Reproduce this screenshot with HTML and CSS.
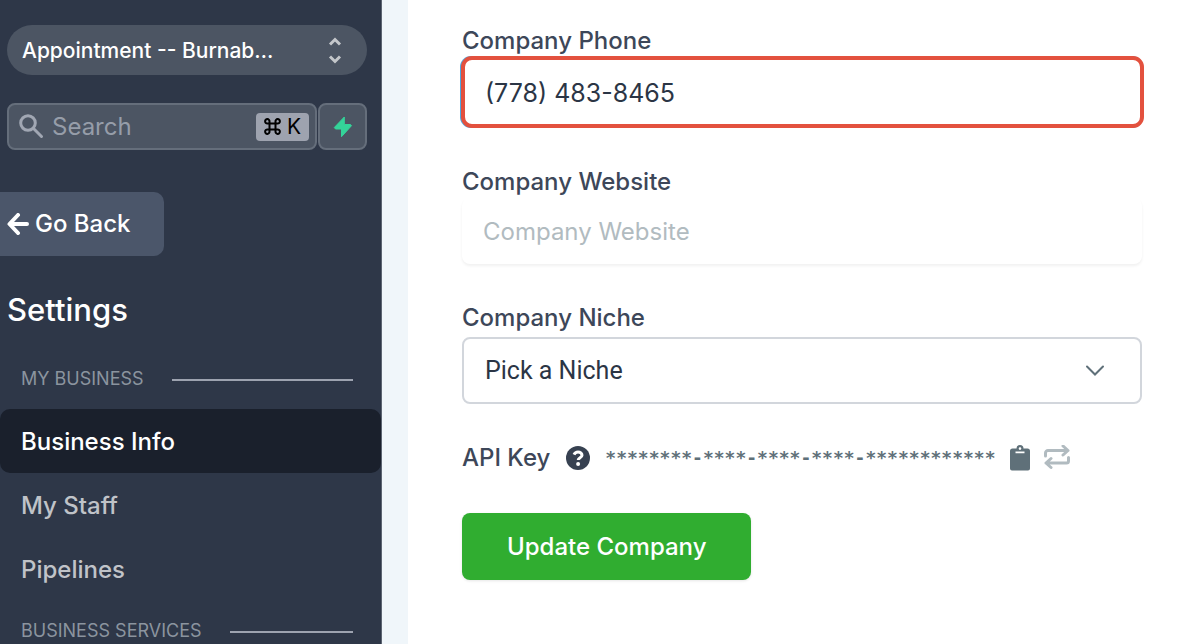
FILE: index.html
```html
<!DOCTYPE html>
<html lang="en">
<head>
<meta charset="utf-8">
<title>Business Info</title>
<meta name="viewport" content="width=device-width, initial-scale=1">
<link rel="stylesheet" href="styles.css">
</head>
<body>
<div class="app">
  <aside class="sidebar">
    <button type="button" class="switcher">
      <span class="switcher-name">Appointment -- Burnab…</span>
      <svg class="switcher-icon" width="14" height="28" viewBox="0 0 14 28" aria-hidden="true"><path d="M2 7.500l5-5 5 5M2 19.500l5 5 5-5"/></svg>
    </button>
    <div class="search-row">
      <label class="search">
        <svg width="25" height="25" viewBox="0 0 25 25" aria-hidden="true"><circle cx="9" cy="9" r="7.300"/><path d="M14.500 14.500l8 8"/></svg>
        <input class="search-input" type="text" placeholder="Search" aria-label="Search">
        <kbd class="shortcut"><svg width="17" height="17" viewBox="0 0 17 17" aria-hidden="true"><path d="M5.500 5.500h6v6h-6zM5.500 5.500H3.500a2.200 2.200 0 1 1 2-2zM11.500 5.500v-2a2.200 2.200 0 1 1 2 2zM11.500 11.500h2a2.200 2.200 0 1 1-2 2zM5.500 11.500v2a2.200 2.200 0 1 1-2-2z"/></svg>K</kbd>
      </label>
      <button type="button" class="bolt" aria-label="Quick actions">
        <svg width="20" height="22" viewBox="0 0 20 22" aria-hidden="true"><path d="M11.300 1 1.300 11.500 2.500 13h6v7.700L18.500 9.700 17.500 8.500h-6.200z"/></svg>
      </button>
    </div>
    <button type="button" class="back">
      <svg width="22" height="22" viewBox="0 0 22 22" aria-hidden="true"><path d="M11 2 2.500 11l8.500 9M3.500 11H20"/></svg>
      <span>Go Back</span>
    </button>
    <h1 class="title">Settings</h1>
    <nav class="nav">
      <h2 class="section">My Business</h2>
      <a class="item active" href="#info">Business Info</a>
      <a class="item" href="#staff">My Staff</a>
      <a class="item" href="#pipelines">Pipelines</a>
      <h2 class="section section-next">Business Services</h2>
    </nav>
  </aside>
  <main class="main">
    <form class="form">
      <div class="field">
        <label for="phone">Company Phone</label>
        <input id="phone" class="control phone" type="tel" value="(778) 483-8465">
      </div>
      <div class="field">
        <label for="website">Company Website</label>
        <input id="website" class="control website" type="text" placeholder="Company Website">
      </div>
      <div class="field">
        <label for="niche">Company Niche</label>
        <div class="select-wrap">
          <select id="niche" class="control niche"><option>Pick a Niche</option></select>
          <svg class="chevron" width="20" height="12" viewBox="0 0 20 12" aria-hidden="true"><path d="M2 1.500l8 8 8-8"/></svg>
        </div>
      </div>
      <div class="api">
        <span class="api-label">API Key</span>
        <svg class="help" width="24" height="24" viewBox="0 0 24 24" aria-hidden="true"><circle cx="12" cy="12" r="12"/><path d="M8 8.700C8.800 6.900 10 6 12 6c2.300 0 4 1.300 4 3.200 0 2.600-3.800 2.500-3.800 4.900"/><circle class="dot" cx="12.100" cy="18" r="2"/></svg>
        <code class="key">********-****-****-****-************</code>
        <button type="button" class="icon-button" aria-label="Copy API key">
          <svg width="20" height="26" viewBox="0 0 20 26" aria-hidden="true"><path fill="#5f7079" fill-rule="evenodd" d="M2.500 3.500h4a3.500 3.500 0 0 1 7 0h4A2.500 2.500 0 0 1 20 6v17.500a2 2 0 0 1-2 2H2a2 2 0 0 1-2-2V6a2.500 2.500 0 0 1 2.500-2.500zM10 2.300a1.300 1.300 0 1 0 0 2.600 1.300 1.300 0 0 0 0-2.600zM5.500 6.500v1.800h9V6.500z"/></svg>
        </button>
        <button type="button" class="icon-button" aria-label="Regenerate API key">
          <svg width="26" height="26" viewBox="0 0 26 26" aria-hidden="true"><path class="swap" d="M1.500 11V8a2.500 2.500 0 0 1 2.500-2.500h20M19 1l5 4.500-5 4.500M24.500 12.500V16a2 2 0 0 1-2 2H2M7 13.500 2 18l5 4.500"/></svg>
        </button>
      </div>
      <button type="submit" class="submit">Update Company</button>
    </form>
  </main>
</div>
</body>
</html>
```
FILE: styles.css
```css
*,
*::before,
*::after {
  box-sizing: border-box;
}

body {
  margin: 0;
  background: #f0f6fa;
  color: #3d4759;
  font-family: Inter, "Liberation Sans", sans-serif;
  font-size: 24px;
  line-height: 32px;
}

button,
input,
select {
  margin: 0;
  border: 0;
  font: inherit;
}

button {
  cursor: pointer;
}

svg {
  display: block;
  flex: none;
  fill: none;
}

.app {
  display: flex;
  gap: 26px;
  min-height: 100vh;
}

.sidebar {
  flex: none;
  width: 382px;
  height: 100vh;
  overflow: hidden;
  padding-top: 25px;
  border-right: 1px solid #5d6572;
  background: #2e3748;
}

.switcher {
  display: flex;
  align-items: center;
  justify-content: space-between;
  width: calc(100% - 21px);
  height: 50px;
  margin: 0 14px 28px 7px;
  padding: 1px 25px 0 15px;
  border-radius: 25px;
  background: #4c5563;
  color: #fff;
  font-size: 21px;
  font-weight: 500;
}

.switcher-icon {
  stroke: #c3c6ca;
  stroke-width: 3;
}

.search-row {
  display: flex;
  gap: 1px;
  margin: 0 14px 42px 7px;
}

.search {
  display: flex;
  flex: 1;
  align-items: center;
  gap: 8px;
  min-width: 0;
  height: 47px;
  padding: 0 6px 0 10px;
  border: 2px solid #656e7b;
  border-radius: 8px;
  background: #4c5563;
}

.search svg {
  stroke: #a1a7b3;
  stroke-width: 3;
  stroke-linecap: round;
}

.search-input {
  flex: 1;
  min-width: 0;
  padding: 0;
  outline: 0;
  background: transparent;
  color: #fff;
}

.search-input::placeholder {
  color: #969da9;
  opacity: 1;
}

.shortcut {
  display: flex;
  align-items: center;
  gap: 6px;
  height: 28px;
  padding: 0 8px;
  border-radius: 4px;
  background: #9ea3af;
  color: #000;
  font-family: inherit;
  font-size: 21px;
}

.search .shortcut svg {
  stroke: #000;
  stroke-width: 2;
}

.bolt {
  display: grid;
  place-items: center;
  width: 49px;
  padding: 0;
  border: 2px solid #656e7b;
  border-radius: 8px;
  background: #4c5563;
}

.bolt path {
  fill: #34d399;
  stroke: #34d399;
  stroke-width: 1;
  stroke-linejoin: round;
}

.back {
  display: flex;
  align-items: center;
  gap: 6px;
  height: 64px;
  padding: 0 33px 0 7px;
  border-radius: 0 10px 10px 0;
  background: #4b566a;
  color: #fff;
  font-weight: 500;
}

.back path {
  stroke: #fff;
  stroke-width: 4;
  stroke-linecap: round;
  stroke-linejoin: round;
}

.title {
  margin: 34px 0 33px 7px;
  color: #fff;
  font-size: 31px;
  font-weight: 500;
  line-height: 40px;
}

.section {
  display: flex;
  align-items: center;
  gap: 28px;
  margin: 0 28px 14px 21px;
  color: #8b949f;
  font-size: 18px;
  font-weight: 400;
  text-transform: uppercase;
}

.section::after {
  flex: 1;
  height: 2px;
  margin-top: 2px;
  background: #9da3b0;
  content: "";
}

.section-next {
  margin-top: 14px;
}

.item {
  display: block;
  padding: 17px 21px 15px;
  border-radius: 10px;
  color: #c0c3c8;
  font-weight: 500;
  text-decoration: none;
}

.item.active {
  background: #1a202c;
  color: #fff;
}

.main {
  flex: 1;
  min-width: 0;
  padding: 25px 45px 24px 54px;
  background: #fff;
}

.form {
  display: flex;
  flex-direction: column;
}

.field {
  display: flex;
  flex-direction: column;
  margin-bottom: 38px;
  font-weight: 500;
}

.control {
  width: 100%;
  height: 67px;
  padding: 0 21px;
  border-radius: 8px;
  background: #fff;
  color: #2b3545;
  font-size: 25px;
  font-weight: 400;
}

.phone {
  width: auto;
  height: 72px;
  margin: -1px -2px 0 -1px;
  padding: 1px 20px 0;
  border: 4px solid #e3513e;
  border-radius: 11px;
  outline: 0;
  box-shadow: -1px 0 0 #4fa8e0;
}

.website {
  height: 66px;
  box-shadow: 0 2px 3px rgba(0, 0, 0, 0.06);
  font-size: 24px;
}

.website::placeholder {
  color: #b1bbc0;
  opacity: 1;
}

.select-wrap {
  display: grid;
  align-items: center;
  margin-top: 3px;
}

.select-wrap > * {
  grid-area: 1 / 1;
}

.niche {
  appearance: none;
  border: 2px solid #d2d6dc;
  font-family: Roboto, sans-serif;
}

.chevron {
  justify-self: end;
  margin-right: 37px;
  pointer-events: none;
  stroke: #5f7079;
  stroke-width: 2;
  stroke-linecap: round;
}

.api {
  display: flex;
  align-items: center;
  margin-bottom: 39px;
  font-weight: 500;
}

.help {
  margin: 0 15px 0 16px;
  fill: #374151;
}

.help path {
  fill: none;
  stroke: #fff;
  stroke-width: 3;
}

.help .dot {
  fill: #fff;
}

.key {
  color: #5f7079;
  font-family: "DejaVu Sans Mono", monospace;
  font-size: 18px;
  font-weight: 700;
}

.icon-button {
  margin-left: 14px;
  padding: 0;
  background: transparent;
}

.swap {
  stroke: #b1bbc0;
  stroke-width: 3;
  stroke-linecap: round;
  stroke-linejoin: round;
}

.submit {
  align-self: flex-start;
  height: 67px;
  padding: 0 45px;
  border-radius: 8px;
  background: #30ad30;
  box-shadow: 0 1px 3px rgba(0, 0, 0, 0.1);
  color: #fff;
  font-weight: 500;
}
```
